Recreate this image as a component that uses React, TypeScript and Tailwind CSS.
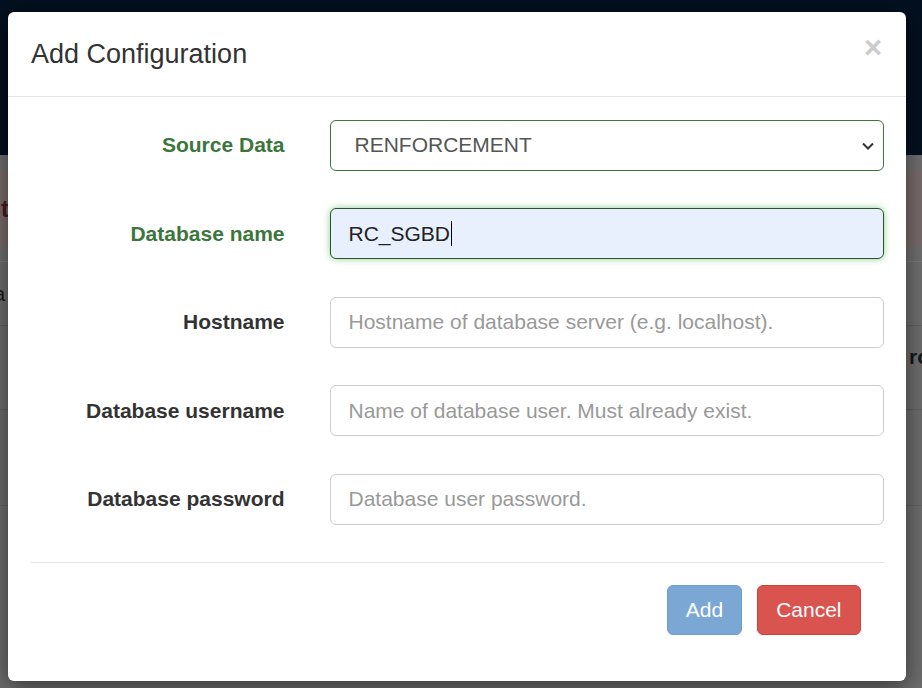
import React from "react";

const font = { fontFamily: '"Liberation Sans", Arial, Helvetica, sans-serif' };

function Row({ label, green, last, children }: { label: string; green?: boolean; last?: boolean; children: React.ReactNode }) {
  return (
    <div className={`flex items-center ${last ? "" : "mb-[37.5px]"}`}>
      <label
        className={`w-[254px] text-right text-[21px] font-bold leading-[30px] ${green ? "text-[#3c763d]" : "text-[#333]"}`}
      >
        {label}
      </label>
      <div className="ml-[45px] flex-1">{children}</div>
    </div>
  );
}

export default function App() {
  return (
    <div className="relative w-[922px] h-[688px] overflow-hidden bg-[#6c6c6c]" style={font}>
      {/* dimmed page behind */}
      <div className="h-[155px] bg-[#03101f]" />
      <div className="h-[15px] bg-[#6e6e6e]" />
      <div className="h-[77px] bg-[#786a6a] flex items-center pl-[1px] text-[24px] font-bold text-[#4a1818]">t</div>
      <div className="h-[15px] bg-[#6e6e6e] border-b border-[#7a7a7a]" />
      <div className="h-[64px] bg-[#6d6d6d] border-b border-[#5f5f5f] flex items-center text-[20px] text-[#1a1a1a] -ml-[6px]">
        a
      </div>
      <div className="h-[84px] bg-[#6c6c6c] border-b border-[#5f5f5f] flex items-start pt-[15px] justify-end text-[21px] font-bold text-[#161616] -mr-[8px]">
        ro
      </div>
      <div className="h-[96px] bg-[#6b6b6b] border-b border-[#616161]" />

      {/* modal */}
      <div className="absolute left-[8px] top-[12px] w-[898px] h-[669px] bg-white rounded-[6px] shadow-[0_5px_22px_rgba(0,0,0,0.5)] flex flex-col">
        <div className="h-[85px] border-b border-[#e5e5e5] px-[23px] flex items-center justify-between">
          <h4 className="text-[27px] leading-[38px] text-[#333]">Add Configuration</h4>
          <span className="text-[31px] font-bold leading-none text-[#cccccc] mr-[1px] -mt-[14px]">×</span>
        </div>
        <div className="px-[22.5px] pt-[22.5px] flex flex-col">
          <Row label="Source Data" green>
            <div className="relative h-[51px] rounded-[6px] border border-[#3c763d] bg-white flex items-center pl-[24px] text-[21px] text-[#555]">
              RENFORCEMENT
              <svg className="absolute right-[8px] top-[19px]" width="14" height="12" viewBox="0 0 14 12" fill="none">
                <path d="M2 3.5 L7 8.5 L12 3.5" stroke="#333" strokeWidth="2" />
              </svg>
            </div>
          </Row>
          <Row label="Database name" green>
            <div className="h-[51px] rounded-[6px] border border-[#2b542c] bg-[#e8f0fe] shadow-[0_0_7px_#8fce8f] flex items-center pl-[18px] text-[21px] text-[#222]">
              RC_SGBD
              <span className="inline-block w-px h-[25px] bg-black ml-[1px]" />
            </div>
          </Row>
          <Row label="Hostname">
            <div className="h-[51px] rounded-[6px] border border-[#cccccc] bg-white flex items-center pl-[18px] text-[21px] text-[#999]">
              Hostname of database server (e.g. localhost).
            </div>
          </Row>
          <Row label="Database username">
            <div className="h-[51px] rounded-[6px] border border-[#cccccc] bg-white flex items-center pl-[18px] text-[21px] text-[#999]">
              Name of database user. Must already exist.
            </div>
          </Row>
          <Row label="Database password" last>
            <div className="h-[51px] rounded-[6px] border border-[#cccccc] bg-white flex items-center pl-[18px] text-[21px] text-[#999]">
              Database user password.
            </div>
          </Row>
          <div className="mt-[37.5px] border-t border-[#e5e5e5]" />
          <div className="flex justify-end gap-[15px] pt-[22px] pr-[23px]">
            <button className="h-[50px] px-[18px] rounded-[6px] bg-[#7aa7d3] border border-[#6f9dca] text-white text-[21px]">
              Add
            </button>
            <button className="h-[50px] px-[18px] rounded-[6px] bg-[#d9534f] border border-[#d43f3a] text-white text-[21px]">
              Cancel
            </button>
          </div>
        </div>
      </div>
    </div>
  );
}
